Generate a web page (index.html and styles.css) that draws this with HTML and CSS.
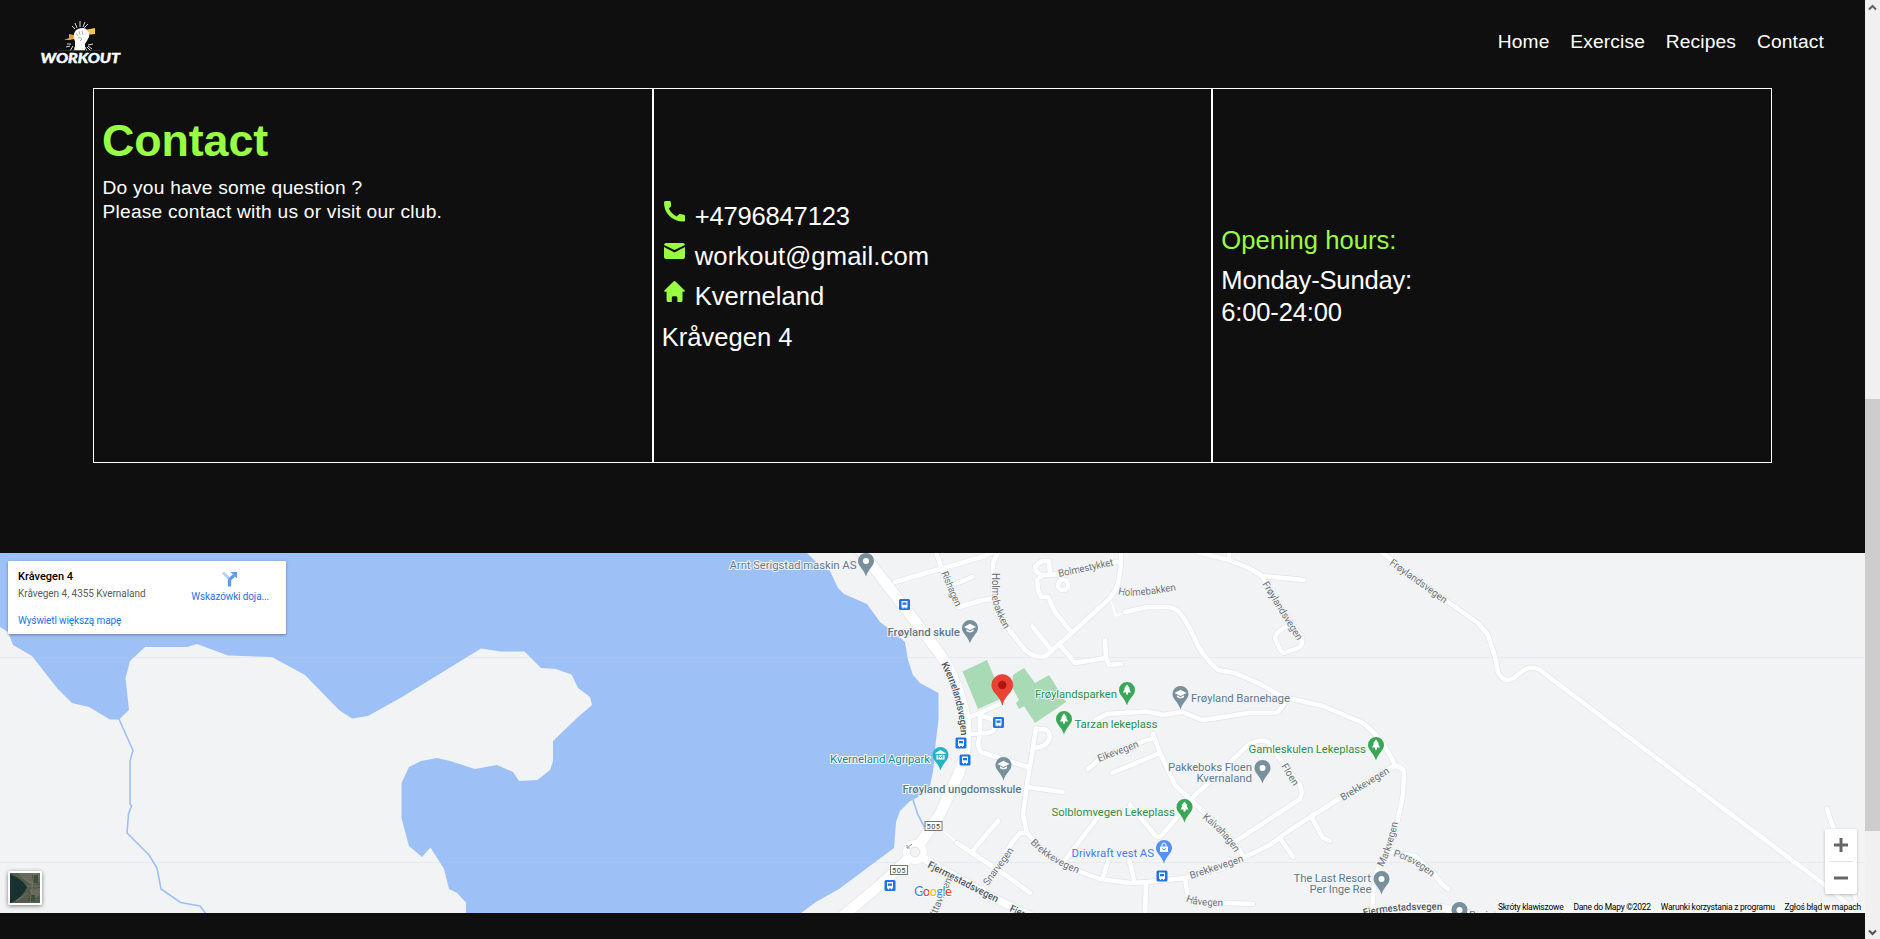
FILE: index.html
```html
<!DOCTYPE html>
<html lang="en">
<head>
<meta charset="utf-8">
<title>Workout - Contact</title>
<link rel="stylesheet" href="styles.css">
</head>
<body>
<div class="page">
  <header class="header">
    <svg class="logo" viewBox="40 18 82 48" width="82" height="48">
      <g stroke="#d9d9d9" stroke-width="1" fill="none">
        <path d="M80 21v6M75 23l2 5M85 22l-2 5M88 24l-4 4M72 26l3 3M67 44h4M66 47l4-1M70 51l3-5M74 51l1-4M93 44l-5 1M92 49l-4-3M87 51l-2-4M91 51l-4-4"/>
      </g>
      <path d="M85 30l10-2v6l-9 1z" fill="#f7c948"/>
      <path d="M64 40l5-2v-4l5 1v4l-4 1z" fill="#d9a92c"/>
      <path d="M74 34q1-4 4-5 5-2 8 0 4 3 3 8-2 4-4 7v6.500H75v-9q-2-4-1-7.500z" fill="#fff"/>
      <path d="M76 33l2 3M79 31l1 4M82 31l1 4M78 38q3-1 4 1l-2 2" stroke="#8a8a8a" stroke-width=".7" fill="none"/>
      <path d="M58 50.500h43" stroke="#3a3a3a" stroke-width=".6"/>
      <text class="logo-text" x="40.500" y="63.300" textLength="79.500" lengthAdjust="spacingAndGlyphs">WORKOUT</text>
    </svg>
    <nav class="nav">
      <a>Home</a><a>Exercise</a><a>Recipes</a><a>Contact</a>
    </nav>
  </header>

  <section class="contact">
    <div class="cell intro">
      <h1>Contact</h1>
      <p>Do you have some question ?<br>Please contact with us or visit our club.</p>
    </div>
    <div class="cell details">
      <p><svg class="icon" viewBox="0 0 21 21"><path d="M1.500 0h4.200q1 0 1.100 1l.3 3.600q0 .6-.5 1.100L4.800 7.500q2.600 5.500 8 8l1.900-2q.5-.5 1.200-.4l4 .7q1.100.2 1.100 1.200v4.500q0 1-1.100 1.100Q10.500 20.500 5.200 14.800 0 9.500 0 1.500 0 0 1.500 0z"/></svg><span class="phone">+4796847123</span></p>
      <p><svg class="icon" viewBox="0 0 21 21"><path d="M2 2h17q1.700.1 2 2L10.500 9 0 4q.3-1.900 2-2zM0 6l10.500 5.500L21 6v10q-.2 2-2 2H2q-1.800 0-2-2z"/></svg><span class="mail">workout@gmail.com</span></p>
      <p><svg class="icon" viewBox="0 0 21 21"><path d="M9.500.4q1-.8 2 0L20.700 9.500q.5 1-.6 1.200l-1.600 0v8.700q-.1 1.600-1.500 1.600h-3.600v-4.500q-.2-1.300-1.500-1.300H9.300q-1.300.1-1.500 1.300V21H4.200q-1.500 0-1.600-1.600v-8.700l-1.700 0q-1.100-.2-.5-1.200z"/></svg><span>Kverneland</span></p>
      <p>Kråvegen 4</p>
    </div>
    <div class="cell hours">
      <p class="accent">Opening hours:</p>
      <p class="times">Monday-Sunday:<br>6:00-24:00</p>
    </div>
  </section>

  <section class="map">
    <svg class="map-canvas" viewBox="0 553 1865 360" width="1865" height="360">
      <defs>
        <path id="lanes" d="M895 582L940 569 985 556 994 552M936 552L942 570 959 607 983 600 993 599M953 585L972 577M998 552L993 563V595L997 613 1010 631 1025 650Q1033 657 1042 657 1047 656 1051 651L1073 632 1110 598Q1118 588 1119 578L1121 565V552M1072 633L1055 612 1048 597H1041L1038 590 1037 580 1042 575 1062 574M1050 574L1049 561 1042 561 1035 566 1036 571 1042 576M1112 562H1121M1063 580a5 5 0 1 0 .1 0M1032 626L1052 651M1060 645L1075 663 1106 658 1105 640M1106 658L1109 665 1121 664M1125 612L1147 607H1165Q1174 607 1179 612 1188 622 1198 646 1208 662 1218 670L1235 673 1260 684 1283 697 1323 706 1361 722Q1380 734 1395 765M1095 720L1107 714 1147 711.500 1163 715 1182 712 1202 720 1217 718 1248 713 1275 713Q1283 710 1286 698M1197 552L1229 560 1249 568 1262 576 1304 580M1229 560V552M1262 576L1275 600 1302 638Q1303 646 1298 648L1284 653Q1280 652 1275 638 1276 632 1287 626M1036 730Q1049 726 1050 737 1048 746 1036 748M1036 728L1027 785 1023 815 1027 833 1050 857 1075 870 1100 879 1130 883 1148 882 1185 878 1220 869 1245 857 1270 845 1283 835 1310 817 1350 792 1392 767Q1400 764 1404 772L1403 795 1397 823 1388 850 1376 873 1373 893V915M1026 833L1020 833 1013 841 990 880 983 890M1027 787L1063 792M980 714V733L978 745 981 752 1028 767M970 717L1002 703M982 716L992 719Q998 724 993 731L988 733 968 734M957 843L1007 876 1030 893M972 852L985 836 998 821M950 878L943 895 932 915M1088 769L1105 755 1153 738V734L1160 753 1175 785 1191 800 1215 822 1240 850 1243 857M1112 773L1160 753M1192 798L1217 775 1248 745Q1260 738 1268 742L1273 750 1300 785Q1303 793 1300 799L1236 841M1130 805L1155 835Q1158 839 1162 835L1192 800M1102 812L1065 860M1110 855L1103 877M1128 855L1134 880M1146 882L1145 915M1185 878L1188 898 1200 902 1253 904M1280 838L1293 857M1312 818L1323 838 1330 841M1390 852L1415 856 1435 875 1442 884 1448 889M1381 552L1448 602 1478 623 1488 635 1495 657 1498 672Q1505 685 1515 677L1524 670Q1532 665 1540 670L1553 680 1825 885 1850 906M1827 809L1834 830 1857 903"/>
        <path id="mains" d="M860 550L878 573 905 608 940 654Q960 684 966 722V745Q964 765 952 788L940 814 924 838 905 862 880 885 843 916"/>
        <path id="arterial" d="M920 856L940 868 1000 901 1040 920M1360 918L1405 907Q1430 903 1475 915"/>
        <path id="s1" d="M941 573L956 608"/>
        <path id="s2" d="M992 573V597Q994 612 1006 632"/>
        <path id="s3" d="M941 664Q959 698 961 737"/>
        <path id="s4" d="M1059 577L1115 565"/>
        <path id="s5" d="M1118 594Q1128 599 1178 590"/>
        <path id="s6" d="M1262 584L1298 642"/>
        <path id="s7" d="M1389 564L1446 605"/>
        <path id="s8" d="M927 867L997 903"/>
        <path id="s9" d="M1009 911L1079 943"/>
        <path id="s10" d="M1364 916Q1395 909 1444 910"/>
        <path id="s11" d="M936 916L957 868"/>
        <path id="s12" d="M988 886L1015 849"/>
        <path id="s13" d="M1099 762L1141 746"/>
        <path id="s14" d="M1030 843Q1048 862 1079 874"/>
        <path id="s15" d="M1202 818Q1224 835 1235 853"/>
        <path id="s16" d="M1191 879L1245 861"/>
        <path id="s17" d="M1343 801L1391 772"/>
        <path id="s18" d="M1281 766L1294 787"/>
        <path id="s19" d="M1186 901Q1192 906 1224 906"/>
        <path id="s20" d="M1383 867Q1392 850 1398 822"/>
        <path id="s21" d="M1393 856Q1415 862 1432 878"/>
        <g id="pin"><path d="M0-8a8 8 0 0 1 8 8c0 5.500-6 8-8 15.500C-2 8-8 5.500-8 0a8 8 0 0 1 8-8z"/></g>
        <g id="dot"><use href="#pin"/><circle r="3" fill="#fff"/></g>
        <g id="school"><use href="#pin"/><path d="M-6-1L0-4.200 6-1 0 2zM-3.500 1.300L0 3.200 3.500 1.300V3.300Q0 5.500-3.500 3.300z" fill="#fff"/></g>
        <g id="tree"><use href="#pin"/><path d="M0-5.500L3-1.500H2L4 2.500H1V4.500H-1V2.500H-4L-2-1.500H-3z" fill="#fff"/></g>
        <g id="bus"><rect x="-5.500" y="-5.500" width="11" height="11" rx="1.500" fill="#1f73e8"/><path d="M-3-3.500H3V3H2V4H1V3H-1V4H-2V3H-3z" fill="#fff"/><path d="M-2-2H2V.3H-2z" fill="#1f73e8"/></g>
      </defs>

      <rect y="553" width="1865" height="360" fill="#9dc0f7"/>
      <g fill="#f1f3f5">
        <path d="M0 627L8 632 13 645 32 656 57 688 72 703 89 707 110 719.500H119L129 710 125.500 678 130 661 145 647H187L197 644 228 655.500 272 657 305 675 339 710 352 718.500 368 716 402 697 481 648.500 501 651.500H524.500L541 668 556 669 571.500 674.500 578 688 590 697 592 705 577 718 553 741V761L550 770 537.500 780 519 781 513 772 497 765 475 769 450 761 437 758 421 761 409 767 401.500 783V818L409 846 422 857 430.500 847.500 444 869 449 889 457 893 466 902.500V913H0z"/>
        <path d="M807 553L815 561 830 571 838 588 844 594 867 604 880 622 888 628 905 642 908 660 913 675 920 683 938.500 693V720L936 740 933 772 929 790 913 800 910 801 900 811 896 822 894 848 839 889 816 902 801 913H1865V553z"/>
      </g>
      <path d="M119 719L133 750.500 130 761V804L131.500 806 128.500 814 127 833 149 855 157 868 161 889 180.500 902.500 200 906 206 914M913 800L918 815 925 828" fill="none" stroke="#9dc0f7" stroke-width="1.600"/>
      <path d="M0 657.500H1865M0 862.500H1865" stroke="#c8cdd4" stroke-opacity=".22"/>
      <g fill="#a8dab5">
        <path d="M962.500 671.500L987 660 1003 698 978 709z"/>
        <path d="M1013 675L1024 668 1035 683 1049 675 1066 702 1035 723 1024 706 1019 709 1016 703 1019 700 1012 687z"/>
      </g>

      <path class="footpath" d="M1110 598L1116 616 1125 612M942 830L957 843"/>
      <g class="road-case">
        <use href="#lanes" stroke-width="5.900"/>
        <use href="#arterial" stroke-width="9"/>
        <use href="#mains" stroke-width="12"/>
        <circle cx="915" cy="852" r="12.500" stroke="none" fill="#e3e6ea"/>
      </g>
      <g class="road">
        <use href="#lanes" stroke-width="4.500"/>
        <use href="#arterial" stroke-width="7.500"/>
        <use href="#mains" stroke-width="10.500"/>
        <circle cx="915" cy="852" r="12" stroke="none" fill="#fff"/>
      </g>
      <circle cx="915" cy="852" r="5" fill="#f1f3f5" stroke="#e1e4e8"/>
      <path d="M907 848l5-4M907 848v-3M907 848h3" stroke="#8c9aa5" fill="none"/>

      <g class="street">
        <text textLength="37"><textPath href="#s1">Rishagen</textPath></text>
        <text textLength="59"><textPath href="#s2">Holmebakken</textPath></text>
        <text class="major" textLength="75"><textPath href="#s3">Kvernelandsvegen</textPath></text>
        <text textLength="56"><textPath href="#s4">Bolmestykket</textPath></text>
        <text textLength="59"><textPath href="#s5">Holmebakken</textPath></text>
        <text textLength="67"><textPath href="#s6">Frøylandsvegen</textPath></text>
        <text textLength="68"><textPath href="#s7">Frøylandsvegen</textPath></text>
        <text class="major" textLength="78"><textPath href="#s8">Fjermestadsvegen</textPath></text>
        <text class="major" textLength="76"><textPath href="#s9">Fjermestadsvegen</textPath></text>
        <text class="major" textLength="79"><textPath href="#s10">Fjermestadsvegen</textPath></text>
        <text textLength="40"><textPath href="#s11">Ittavegen</textPath></text>
        <text textLength="44"><textPath href="#s12">Snarvegen</textPath></text>
        <text textLength="43"><textPath href="#s13">Eikevegen</textPath></text>
        <text textLength="57"><textPath href="#s14">Brekkevegen</textPath></text>
        <text textLength="48"><textPath href="#s15">Kalvahagen</textPath></text>
        <text textLength="56"><textPath href="#s16">Brekkevegen</textPath></text>
        <text textLength="55"><textPath href="#s17">Brekkevegen</textPath></text>
        <text textLength="24"><textPath href="#s18">Floen</textPath></text>
        <text textLength="38"><textPath href="#s19">Håvegen</textPath></text>
        <text textLength="47"><textPath href="#s20">Markvegen</textPath></text>
        <text textLength="44"><textPath href="#s21">Porsvegen</textPath></text>
      </g>

      <g class="shield">
        <rect x="925" y="821.500" width="17" height="9"/><text x="933.500" y="829">505</text>
        <rect x="890.500" y="865.500" width="17" height="9"/><text x="899" y="873">505</text>
      </g>

      <use href="#bus" x="904.500" y="604.500"/><use href="#bus" x="998.500" y="722.500"/>
      <use href="#bus" x="961" y="743"/><use href="#bus" x="965" y="760"/>
      <use href="#bus" x="890" y="885.500"/><use href="#bus" x="1162" y="876"/>

      <g fill="#78909c">
        <use href="#dot" x="866" y="561"/><use href="#dot" x="1262.500" y="768"/>
        <use href="#dot" x="1381.500" y="879"/><use href="#dot" x="1459.500" y="910"/>
        <use href="#school" x="970" y="628"/><use href="#school" x="1003.500" y="765"/><use href="#school" x="1180.500" y="694"/>
      </g>
      <g fill="#3aa757">
        <use href="#tree" x="1127" y="690"/><use href="#tree" x="1064" y="719"/>
        <use href="#tree" x="1376" y="745"/><use href="#tree" x="1184.500" y="807"/>
      </g>
      <g transform="translate(940.500 755)" fill="#26b3c7"><use href="#pin"/><path d="M-5-2L0-5 5-2V-1H-5zM-4 0H4V4.500H-4z" fill="#fff"/><path d="M-2.300 3.500V.5L0 2.500 2.300.5V3.500" fill="none" stroke="#26b3c7"/></g>
      <g transform="translate(1164 848)" fill="#5491f5"><use href="#pin"/><rect x="-4" y="-1.500" width="8" height="5.500" fill="#fff"/><path d="M-2-1.500V-3a2 2 0 0 1 4 0V-1.500" fill="none" stroke="#fff"/><path d="M-2 .5q2 2.500 4 0" fill="none" stroke="#5491f5"/></g>
      <g transform="translate(1002.300 685)"><path d="M0-10.500a10.500 10.500 0 0 1 10.500 10.500C10.500 8 2 10 0 20-2 10-10.500 8-10.500 0A10.500 10.500 0 0 1 0-10.500z" fill="#ea4335" stroke="#d3372b" stroke-width=".6"/><circle r="4.200" fill="#b31412"/></g>

      <g class="poi">
        <text x="729.500" y="569" textLength="127">Arnt Serigstad maskin AS</text>
        <text class="strong" x="887.500" y="636" textLength="72.500">Frøyland skule</text>
        <text class="strong" x="902.500" y="792.500" textLength="119">Frøyland ungdomsskule</text>
        <text x="1191" y="702" textLength="99">Frøyland Barnehage</text>
        <text x="1168" y="771" textLength="84">Pakkeboks Floen</text>
        <text x="1196.500" y="782" textLength="55.500">Kvernaland</text>
        <text x="1293.500" y="882" textLength="77.500">The Last Resort</text>
        <text x="1309.500" y="893" textLength="62">Per Inge Ree</text>
        <text x="1469" y="919" textLength="108">Dyrisland transport as</text>
        <text class="teal" x="830" y="763" textLength="100">Kverneland Agripark</text>
        <text class="green" x="1035" y="698" textLength="82">Frøylandsparken</text>
        <text class="green" x="1074.500" y="727.500" textLength="83">Tarzan lekeplass</text>
        <text class="green" x="1248.500" y="753" textLength="117.500">Gamleskulen Lekeplass</text>
        <text class="green" x="1051.500" y="816" textLength="123.500">Solblomvegen Lekeplass</text>
        <text class="blue" x="1071.500" y="856.500" textLength="82.500">Drivkraft vest AS</text>
      </g>
      <text class="google" x="914" y="895.500" textLength="38"><tspan fill="#4285f4">G</tspan><tspan fill="#ea4335">o</tspan><tspan fill="#fbbc04">o</tspan><tspan fill="#4285f4">g</tspan><tspan fill="#34a853">l</tspan><tspan fill="#ea4335">e</tspan></text>
    </svg>

    <div class="place-card">
      <div class="place">
        <div class="place-name">Kråvegen 4</div>
        <div class="place-address">Kråvegen 4, 4355 Kvernaland</div>
        <a class="larger">Wyświetl większą mapę</a>
      </div>
      <div class="directions">
        <svg viewBox="0 0 16 16" width="16" height="16"><path d="M1 1.500L7.500 8" stroke="#b3d0f5" stroke-width="3"/><path d="M7.500 15.500V10Q7.500 8 12 4.500" stroke="#5f9de8" stroke-width="3.400" fill="none"/><path d="M8.500 1H15V7.500z" fill="#5f9de8"/></svg>
        <a>Wskazówki doja...</a>
      </div>
    </div>

    <div class="satellite">
      <svg viewBox="0 0 30 30" width="30" height="30">
        <rect width="30" height="30" fill="#535c4c"/>
        <path d="M8 0h22v9l-8 3-6-4zM19 17l11-2v7l-6 3z" fill="#69695c"/>
        <path d="M22 2h6v8h-5zM20 22h5v6h-7z" fill="#3c4f3a"/>
        <path d="M0 1Q12 6 17 14 13 24 1 30H0z" fill="#17322f"/>
        <path d="M17 13h13M24 0l-4 30M10 3l12 8M6 28l12-8" stroke="#857e70" stroke-width=".6"/>
      </svg>
    </div>

    <div class="zoom">
      <svg viewBox="0 0 14 14" width="14" height="14"><path d="M0 7h14M7 0v14" stroke="#666" stroke-width="3"/></svg>
      <span class="zoom-line"></span>
      <svg viewBox="0 0 14 14" width="14" height="14"><path d="M0 7h14" stroke="#666" stroke-width="3"/></svg>
    </div>

    <div class="credits"><span>Skróty klawiszowe</span><span>Dane do Mapy ©2022</span><span>Warunki korzystania z programu</span><span>Zgłoś błąd w mapach</span></div>
  </section>
</div>

<aside class="scrollbar">
  <svg viewBox="0 0 15 15" width="15" height="15"><path d="M4 9.500l3.500-3.500L11 9.500" fill="none" stroke="#606060" stroke-width="2"/></svg>
  <div class="thumb"></div>
  <svg viewBox="0 0 15 15" width="15" height="15"><path d="M4 6.500l3.500 3.500L11 6.500" fill="none" stroke="#505050" stroke-width="2"/></svg>
</aside>
</body>
</html>
```

FILE: styles.css
```css
* { box-sizing: border-box; margin: 0; padding: 0; }

body {
  display: flex;
  width: 1880px;
  height: 939px;
  overflow: hidden;
  background: #0f0f0f;
  color: #fff;
  font: 19.2px/24px "Liberation Sans", Arial, sans-serif;
}

.page { width: 1865px; height: 939px; }

.header {
  display: flex;
  justify-content: space-between;
  height: 88px;
  padding: 18px 41px 0 40px;
}
.logo { display: block; }
.logo-text { font: italic 900 14px Lato, "Open Sans", sans-serif; fill: #fff; stroke: #fff; stroke-width: .4; }
.nav { display: flex; gap: 20.800px; padding-top: 12px; letter-spacing: .14px; }

.contact {
  display: grid;
  grid-template-columns: repeat(3, 1fr);
  width: 1679px;
  height: 375px;
  margin: 0 auto 90px 93px;
}
.cell { border: 1px solid #fff; padding: 0 8px; }
.intro { padding-top: 25px; }
.intro h1 { color: #99ff42; font-size: 44.800px; line-height: 52px; margin-bottom: 10px; letter-spacing: -.1px; }
.intro p { letter-spacing: .22px; padding-left: .5px; }
.details, .hours {
  display: flex;
  flex-direction: column;
  gap: 8.200px;
  font-size: 25.600px;
  line-height: 32px;
}
.details { padding-top: 111px; }
.hours { padding-top: 135px; gap: 8px; }
.details p { display: flex; gap: 10px; }
.phone { letter-spacing: -.2px; }
.mail { letter-spacing: .14px; }
.times { letter-spacing: -.2px; }
.icon { width: 21px; height: 21px; margin: 1px 0 0 2px; fill: #99ff42; }
.accent { color: #99ff42; }

.map { position: relative; height: 360px; overflow: hidden; font-family: Roboto, sans-serif; }
.map-canvas { display: block; }
.road, .road-case { fill: none; stroke-linecap: round; stroke-linejoin: round; }
.road { stroke: #fff; }
.road-case { stroke: #e3e6ea; }
.footpath { fill: none; stroke: #fff; stroke-width: 1.500; }
.street text, .poi text, .google { paint-order: stroke; stroke: #f5f6f8; stroke-width: 2px; stroke-linejoin: round; }
.street { font-size: 10px; fill: #6c7176; }
.street .major { font-weight: 500; fill: #50555a; }
.poi { font-size: 11.500px; fill: #5f7a88; }
.poi .strong { font-weight: 500; }
.poi .teal { fill: #168a96; }
.poi .green { fill: #2b9148; }
.poi .blue { fill: #3c7ef0; }
.shield rect { fill: #fff; stroke: #73777b; }
.shield text { font-size: 7.500px; fill: #444; text-anchor: middle; letter-spacing: .5px; }
.google { font: 500 13px Lato, sans-serif; stroke: #fff; }

.place-card {
  position: absolute;
  left: 8px;
  top: 8px;
  display: flex;
  justify-content: space-between;
  width: 278px;
  height: 73px;
  padding: 9px 17px 0 10px;
  border-radius: 1px;
  background: #fff;
  box-shadow: 0 1px 3px rgba(0, 0, 0, .35);
  font-size: 10px;
  line-height: 14px;
  white-space: nowrap;
}
.place-name { color: #000; font-size: 11px; font-weight: 500; margin-bottom: 3px; }
.place-address { color: #5b5b5b; margin-bottom: 13px; letter-spacing: -.03px; }
.larger, .directions a { color: #1a73e8; letter-spacing: -.12px; }
.directions { display: flex; flex-direction: column; align-items: center; gap: 3px; padding-top: 1px; }

.satellite {
  position: absolute;
  left: 8px;
  top: 318px;
  width: 34px;
  height: 34px;
  border: 2px solid #fff;
  border-radius: 2px;
  box-shadow: 0 1px 4px rgba(0, 0, 0, .5);
}
.satellite svg { display: block; }

.zoom {
  position: absolute;
  left: 1825px;
  top: 276px;
  display: flex;
  flex-direction: column;
  align-items: center;
  justify-content: space-between;
  width: 32px;
  height: 65px;
  padding: 9px 0;
  border-radius: 2px;
  background: #fff;
  box-shadow: 0 1px 3px rgba(0, 0, 0, .25);
}
.zoom-line { width: 24px; height: 1px; background: #e3e3e3; }

.credits {
  position: absolute;
  right: 0;
  bottom: 0;
  display: flex;
  justify-content: space-between;
  width: 371px;
  height: 11px;
  padding: 0 4px;
  background: rgba(245, 245, 245, .8);
  color: #000;
  font-size: 8.500px;
  letter-spacing: -.25px;
  line-height: 11px;
  white-space: nowrap;
}

.scrollbar {
  display: flex;
  flex-direction: column;
  width: 15px;
  height: 939px;
  background: #f0f0f0;
}
.scrollbar svg { display: block; }
.thumb { height: 432px; margin: 384px 0 auto; background: #cdcdcd; }
```
